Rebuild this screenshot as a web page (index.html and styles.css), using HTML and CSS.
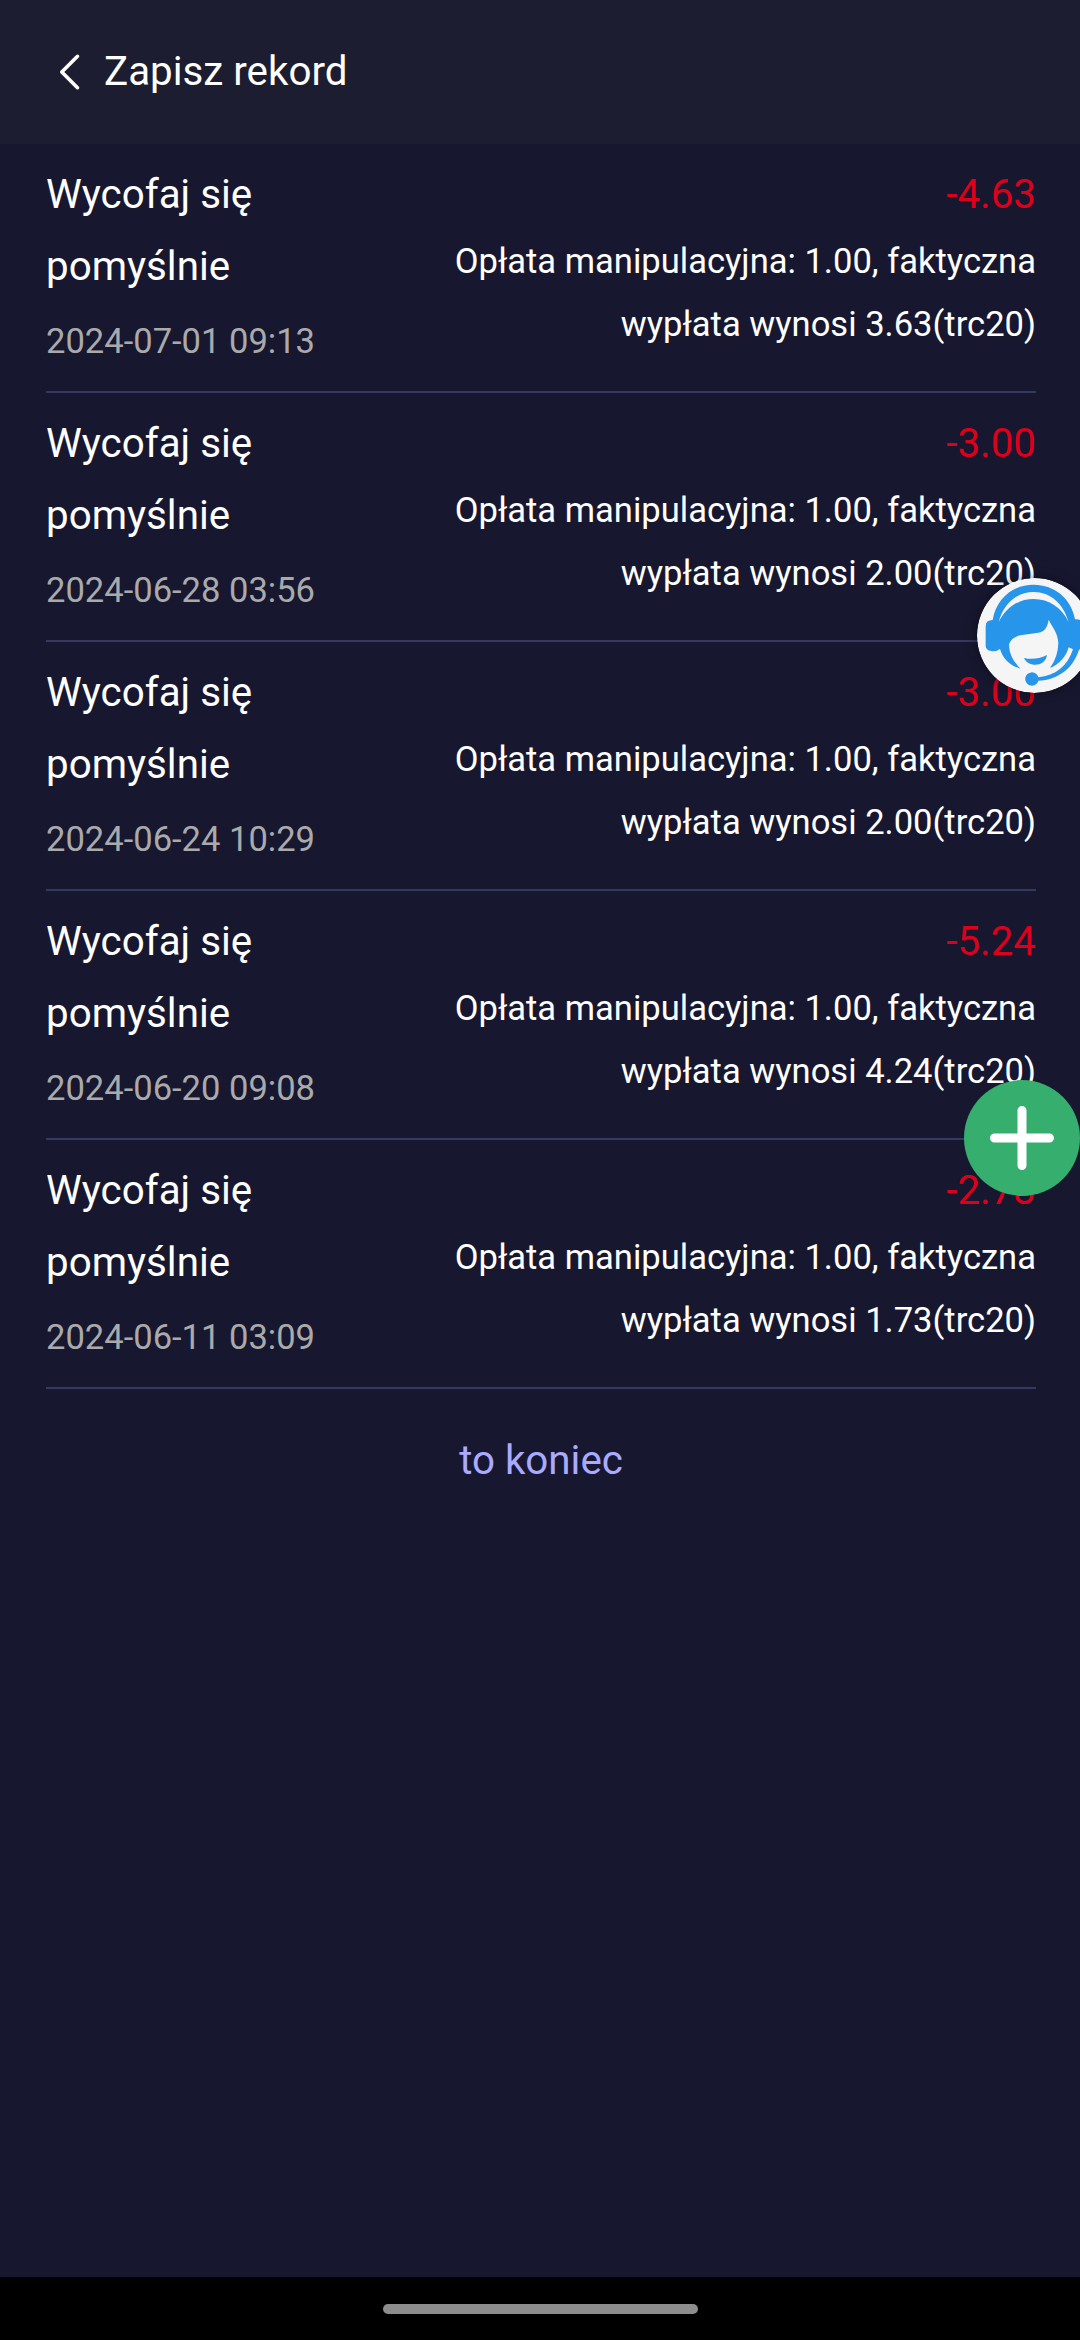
FILE: index.html
```html
<!DOCTYPE html>
<html lang="pl">
<head>
<meta charset="utf-8">
<title>Zapisz rekord</title>
<link rel="stylesheet" href="styles.css">
</head>
<body>
<header class="header">
  <svg class="back" viewBox="0 0 24 40" aria-hidden="true"><path d="M19.5 4.3 3.8 20l15.7 15.7"/></svg>
  <h1 class="heading">Zapisz rekord</h1>
</header>
<main class="content">
  <ul class="records">
    <li class="record">
      <div class="info"><p class="title">Wycofaj się pomyślnie</p><time class="date">2024-07-01 09:13</time></div>
      <div class="details"><p class="amount">-4.63</p><p class="note">Opłata manipulacyjna: 1.00, faktyczna wypłata wynosi 3.63(trc20)</p></div>
    </li>
    <li class="record">
      <div class="info"><p class="title">Wycofaj się pomyślnie</p><time class="date">2024-06-28 03:56</time></div>
      <div class="details"><p class="amount">-3.00</p><p class="note">Opłata manipulacyjna: 1.00, faktyczna wypłata wynosi 2.00(trc20)</p></div>
    </li>
    <li class="record">
      <div class="info"><p class="title">Wycofaj się pomyślnie</p><time class="date">2024-06-24 10:29</time></div>
      <div class="details"><p class="amount">-3.00</p><p class="note">Opłata manipulacyjna: 1.00, faktyczna wypłata wynosi 2.00(trc20)</p></div>
    </li>
    <li class="record">
      <div class="info"><p class="title">Wycofaj się pomyślnie</p><time class="date">2024-06-20 09:08</time></div>
      <div class="details"><p class="amount">-5.24</p><p class="note">Opłata manipulacyjna: 1.00, faktyczna wypłata wynosi 4.24(trc20)</p></div>
    </li>
    <li class="record">
      <div class="info"><p class="title">Wycofaj się pomyślnie</p><time class="date">2024-06-11 03:09</time></div>
      <div class="details"><p class="amount">-2.73</p><p class="note">Opłata manipulacyjna: 1.00, faktyczna wypłata wynosi 1.73(trc20)</p></div>
    </li>
  </ul>
  <p class="end">to koniec</p>
</main>
<footer class="navbar"><span class="handle"></span></footer>
<svg class="support" viewBox="0 0 345 345" aria-label="Support">
  <circle cx="172.5" cy="172.5" r="172.5" fill="#f5f5f5"/>
  <g fill="#2795e9">
    <path d="M26 145Q26 126 47 126C58 62 107 20 170 20S283 62 294 124Q320 122 320 145V198Q320 211 306 215C288 272 243 305 184 308A20 20 0 1 1 184 298C235 293 271 266 288 214L275 208C267 236 247 260 219 270Q243 237 244 195C243 166 227 149 215 125C211 150 202 161 184 164L130 172Q102 178 96 200Q97 241 131 272C98 263 78 243 69 213Q57 222 43 219Q26 216 26 203Z"/>
    <path d="M141 240Q175 248 210 231C204 270 151 267 141 240Z"/>
  </g>
  <path d="M65 133C79 77 120 42 170 42S260 77 275 133C255 89 216 63 170 63S86 89 65 133Z" fill="#f5f5f5"/>
</svg>
<svg class="add" viewBox="0 0 116 116" aria-label="Add">
  <circle cx="58" cy="58" r="58" fill="#36ae6d"/>
  <path d="M30.5 58H85.5M58 30.5V85.5" stroke="#fff" stroke-width="9" stroke-linecap="round"/>
</svg>
</body>
</html>
```
FILE: styles.css
```css
* { box-sizing: border-box; margin: 0; padding: 0; }
body {
  position: relative;
  display: flex;
  flex-direction: column;
  height: 2340px;
  overflow: hidden;
  background: #171830;
  color: #fff;
  font-family: Roboto, sans-serif;
  font-size: 40.32px;
}
.header {
  display: flex;
  align-items: center;
  gap: 22px;
  height: 144px;
  padding-left: 58px;
  background: #1c1d30;
}
.back {
  width: 24px;
  height: 40px;
  fill: none;
  stroke: #fff;
  stroke-width: 3.6;
  stroke-linecap: round;
  stroke-linejoin: round;
}
.heading { padding-bottom: 2px; font-size: inherit; font-weight: 400; }
.content { flex: 1; padding: 0 44px 0 46px; }
.records { list-style: none; }
.record {
  display: flex;
  justify-content: space-between;
  height: 249px;
  padding-top: 15px;
  border-bottom: 2px solid #343962;
}
.info { width: 297px; }
.title { width: 240px; line-height: 72px; }
.date {
  display: block;
  margin-top: 7px;
  color: #aaa;
  font-size: 34.56px;
  line-height: 62px;
}
.details { width: 594px; text-align: right; }
.amount { height: 71px; color: #dc001b; line-height: 72px; }
.note { font-size: 34.56px; line-height: 63px; }
.end {
  padding-top: 35px;
  color: #aaaaff;
  line-height: 73px;
  text-align: center;
}
.navbar {
  display: flex;
  justify-content: center;
  height: 63px;
  padding-top: 27px;
  background: #000;
}
.handle {
  width: 315px;
  height: 10px;
  border-radius: 5px;
  background: #8d8d8d;
}
.support {
  position: absolute;
  top: 578px;
  left: 977px;
  width: 115px;
  height: 115px;
  border-radius: 50%;
  box-shadow: 0 0 12px rgba(0, 0, 0, .45);
}
.add {
  position: absolute;
  top: 1080px;
  left: 964px;
  width: 116px;
  height: 116px;
}
```
